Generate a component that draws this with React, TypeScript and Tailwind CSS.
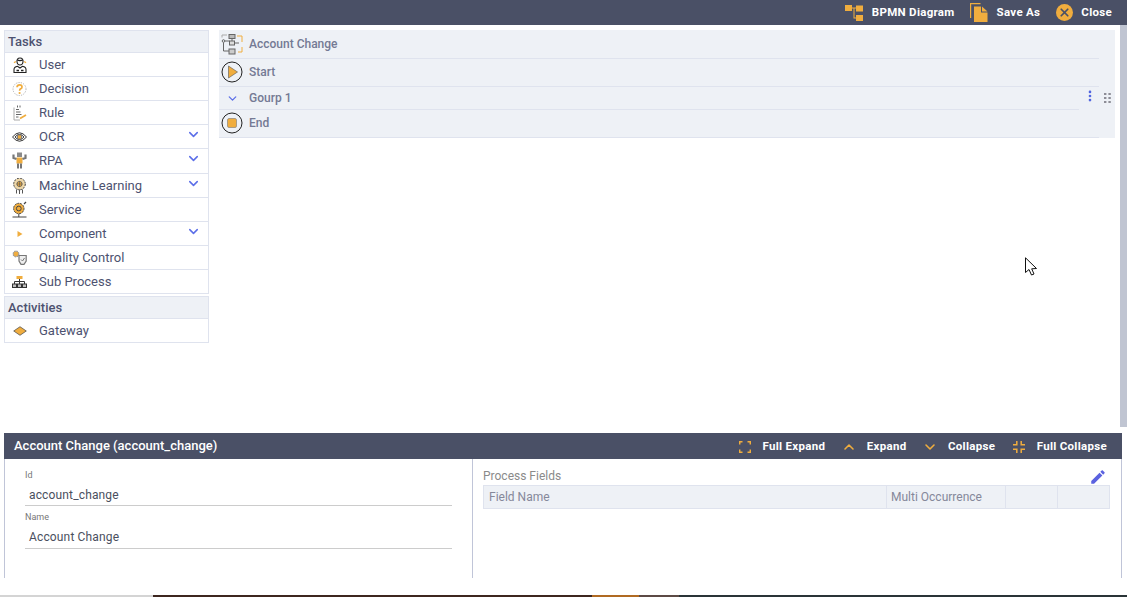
import { ChevronDown, ChevronUp, X, EllipsisVertical } from "lucide-react";
import type { ReactNode } from "react";

const ORANGE = "#f0ad3e";
const INK = "#222";

const UserIcon = () => (
  <svg width="14" height="16" viewBox="0 0 14 16" fill="none" stroke={INK} strokeWidth="1.1">
    <path d="M4 5 Q3.6 1 7 1 Q10.4 1 10 5 Q9.6 8 7 8 Q4.4 8 4 5 Z" />
    <path d="M4 2.8 Q7 4.5 10 2.8" strokeWidth="1.3" />
    <path d="M2.8 4.5 L1 5.8 M11.2 4.5 L13 5.8" stroke={ORANGE} strokeWidth="1.4" />
    <path d="M1 15.5 V12.5 Q1 10 4.5 9.3 L7 11 L9.5 9.3 Q13 10 13 12.5 V15.5 Z" />
    <path d="M3.5 13.5h2.5M8 13.5h2.5" strokeWidth="1.4" />
  </svg>
);
const DecisionIcon = () => (
  <svg width="15" height="16" viewBox="0 0 15 16" fill="none">
    <circle cx="7.5" cy="8" r="6.5" stroke="#a8a8a8" strokeWidth="0.9" strokeDasharray="1.2 1.2" />
    <path d="M5 6.2 Q5.2 3.8 7.6 3.8 Q10 3.8 10 5.9 Q10 7.3 8.5 7.9 Q7.6 8.3 7.6 9.8" stroke={ORANGE} strokeWidth="1.7" />
    <circle cx="7.6" cy="12" r="1.1" fill={ORANGE} />
  </svg>
);
const RuleIcon = () => (
  <svg width="14" height="16" viewBox="0 0 14 16" fill="none" stroke="#666" strokeWidth="1">
    <path d="M1 2.5 V15 H7" stroke="#aaa" />
    <path d="M3 4.5h3M3 7h4.5M3 9.5h5.5M3 12h2.5" />
    <path d="M4.5 0.5v2M7 0.5v2" />
    <path d="M7 13.5 L13 10" stroke={ORANGE} strokeWidth="1.8" />
  </svg>
);
const OcrIcon = () => (
  <svg width="15" height="12" viewBox="0 0 15 12" fill="none" stroke={INK} strokeWidth="0.9">
    <path d="M0.5 6 Q7.5 -2.5 14.5 6 Q7.5 14.5 0.5 6 Z" />
    <path d="M3 6 Q7.5 0.8 12 6 Q7.5 11.2 3 6 Z" />
    <rect x="5.5" y="4" width="4" height="4" fill={ORANGE} stroke="#777" />
  </svg>
);
const RpaIcon = () => (
  <svg width="15" height="17" viewBox="0 0 15 17" fill="none">
    <rect x="5" y="0.5" width="5" height="4.5" fill="#8a8a8a" />
    <rect x="4.5" y="5.5" width="6" height="6" fill={ORANGE} />
    <path d="M4.5 7 L1.5 6 V2.5 M10.5 7 L13.5 6 V2.5" stroke="#777" strokeWidth="2.2" />
    <path d="M6 11.5 V16.5 M9 11.5 V16.5" stroke="#555" strokeWidth="1.6" />
  </svg>
);
const BrainIcon = () => (
  <svg width="15" height="16" viewBox="0 0 15 16" fill="none">
    <circle cx="7.5" cy="6" r="5.8" fill="#eed7a8" stroke="#444" strokeWidth="1" strokeDasharray="2 1" />
    <circle cx="7.5" cy="6" r="2.6" fill={ORANGE} stroke="#555" strokeWidth="0.8" />
    <path d="M4.5 6h6M7.5 3v6" stroke="#555" strokeWidth="0.6" />
    <path d="M4.5 11.5 V15.5 M7.5 11.5 V16 M10.5 11.5 V15.5" stroke="#555" strokeWidth="1" />
  </svg>
);
const ServiceIcon = () => (
  <svg width="15" height="17" viewBox="0 0 15 17" fill="none">
    <circle cx="6.8" cy="7.5" r="5.2" fill={ORANGE} stroke="#444" strokeWidth="1" strokeDasharray="2 0.8" />
    <circle cx="6.8" cy="7.5" r="2.4" stroke="#444" strokeWidth="1" />
    <path d="M0.5 16 H14.5 M6.8 13 V16" stroke="#444" strokeWidth="1" />
    <path d="M12 3 L14 1" stroke="#444" strokeWidth="1.2" />
  </svg>
);
const ComponentIcon = () => (
  <svg width="15" height="16" viewBox="0 0 15 16">
    <path d="M5.5 5 L10.5 8 L5.5 11 Z" fill={ORANGE} />
  </svg>
);
const QualityIcon = () => (
  <svg width="15" height="15" viewBox="0 0 15 15" fill="none">
    <circle cx="4" cy="4" r="2.8" fill={ORANGE} stroke="#999" strokeWidth="1.2" strokeDasharray="1.5 0.7" />
    <path d="M7 5.5 H14.2 V11 L12 14.3 H9 L7 11 Z" fill="#eee" stroke="#777" strokeWidth="1.2" />
    <path d="M9 9.5 L10.5 11 L12.5 8" stroke="#777" strokeWidth="1" />
  </svg>
);
const SubProcessIcon = () => (
  <svg width="15" height="12" viewBox="0 0 15 12" fill="none" stroke="#333" strokeWidth="1">
    <rect x="4.5" y="0" width="6" height="3" fill={ORANGE} stroke="none" />
    <path d="M7.5 3 V5.5 M2.5 8 V5.5 H12.5 V8 M7.5 5.5 V8" />
    <rect x="0.5" y="8" width="4" height="3.5" fill="#bbb" />
    <rect x="5.5" y="8" width="4" height="3.5" fill="#bbb" />
    <rect x="10.5" y="8" width="4" height="3.5" fill="#bbb" />
  </svg>
);
const GatewayIcon = () => (
  <svg width="14" height="10" viewBox="0 0 14 10">
    <path d="M7 0.7 L13.3 5 L7 9.3 L0.7 5 Z" fill={ORANGE} stroke="#444" strokeWidth="0.7" />
  </svg>
);
const ProcessIcon = () => (
  <svg width="22" height="21" viewBox="0 0 22 21" fill="none" stroke="#666" strokeWidth="1">
    <rect x="8" y="0.5" width="6" height="4" fill="#bbb" />
    <path d="M11 4.5 V7" />
    <rect x="8.5" y="7" width="5" height="4" fill="#ddd" />
    <circle cx="2.5" cy="7" r="1.3" />
    <path d="M4 7 H8.5 M2.5 8.5 V17 H8" />
    <path d="M13.5 9 H18" />
    <path d="M16 2 H21 V8" stroke={ORANGE} />
    <path d="M21 13 V18 H17" stroke={ORANGE} />
    <path d="M1 3.5 V1 H6" stroke="#aaa" />
    <rect x="8" y="15" width="6" height="5" fill="#ccc" />
  </svg>
);

const tasks: { label: string; icon: ReactNode; more?: boolean; tall?: boolean }[] = [
  { label: "User", icon: <UserIcon /> },
  { label: "Decision", icon: <DecisionIcon /> },
  { label: "Rule", icon: <RuleIcon /> },
  { label: "OCR", icon: <OcrIcon />, more: true },
  { label: "RPA", icon: <RpaIcon />, more: true, tall: true },
  { label: "Machine Learning", icon: <BrainIcon />, more: true },
  { label: "Service", icon: <ServiceIcon /> },
  { label: "Component", icon: <ComponentIcon />, more: true },
  { label: "Quality Control", icon: <QualityIcon /> },
  { label: "Sub Process", icon: <SubProcessIcon /> },
];

const PaletteRow = ({ label, icon, more, tall }: { label: string; icon: ReactNode; more?: boolean; tall?: boolean }) => (
  <div className={`flex items-center border-b border-[#dfe3ee] text-[13px] text-[#4d5270] ${tall ? "h-[25px] pb-px" : "h-6"}`}>
    <span className="mr-1 flex w-[30px] shrink-0 justify-center pr-px">{icon}</span>
    <span className="flex-1">{label}</span>
    {more ? <ChevronDown size={15} strokeWidth={2.4} className="mr-[7px] -mt-1 text-[#5b6ee8]" /> : null}
  </div>
);

const BarAction = ({ icon, label }: { icon: ReactNode; label: string }) => (
  <div className="flex items-center">
    {icon}
    <span className="text-[11.5px] font-bold tracking-[0.3px] text-white">{label}</span>
  </div>
);

const TreeLine = ({ icon, label, rowClass }: { icon: ReactNode; label: string; rowClass: string }) => (
  <div className={`mr-4 flex items-center border-b border-[#dfe3ee] ${rowClass}`}>
    <span className="mr-1 flex w-[26px] shrink-0 justify-center">{icon}</span>
    <span className="text-[12px] font-medium text-[#747a94]">{label}</span>
  </div>
);

const App = () => {
  return (
    <div className="relative flex h-[597px] w-[1127px] flex-col overflow-hidden bg-white font-['Roboto',sans-serif]">
      <div className="flex h-[25px] shrink-0 items-center justify-end gap-4 bg-[#4a5066] pr-[15px]">
        <BarAction
          label="BPMN Diagram"
          icon={
            <svg width="18" height="16" viewBox="0 0 18 16" fill={ORANGE} className="mr-[9px]">
              <rect x="0" y="0" width="7" height="6" />
              <rect x="11" y="0.5" width="7" height="6" />
              <rect x="11" y="10" width="7" height="6" />
              <path d="M7 2.5h4v1H7zM8.5 3h1v9.5h1.5v1H8.5z" />
            </svg>
          }
        />
        <BarAction
          label="Save As"
          icon={
            <svg width="18" height="19" viewBox="0 0 18 19" fill={ORANGE} className="-ml-px mr-[9px]">
              <path d="M0.6 15 V0.6 H10.5" fill="none" stroke={ORANGE} strokeWidth="1.2" />
              <path d="M4 3.5 H11 V9.5 H17.5 V19 H4 Z" />
              <path d="M12 3.5 L17.5 8.5 H12 Z" />
            </svg>
          }
        />
        <BarAction
          label="Close"
          icon={
            <span className="mr-[8px] flex h-[17px] w-[17px] items-center justify-center rounded-full bg-[#f0ad3e]">
              <X size={13} strokeWidth={3.2} className="text-[#4a5066]" />
            </span>
          }
        />
      </div>

      <div className="flex h-[402px] shrink-0">
        <div className="ml-1 mt-[5px] w-[205px] shrink-0">
          <div className="border border-b-0 border-[#dfe3ee]">
            <div className="flex h-[22px] items-center border-b border-[#dfe3ee] bg-[#eef1f6] pl-[3px] text-[13px] font-medium text-[#4d5270]">
              Tasks
            </div>
            {tasks.map((t) => (
              <PaletteRow key={t.label} label={t.label} icon={t.icon} more={t.more} tall={t.tall} />
            ))}
          </div>
          <div className="mt-[2px] border border-b-0 border-[#dfe3ee]">
            <div className="flex h-[22px] items-center border-b border-[#dfe3ee] bg-[#eef1f6] pl-[3px] text-[13px] font-medium text-[#4d5270]">
              Activities
            </div>
            <PaletteRow label="Gateway" icon={<GatewayIcon />} />
          </div>
        </div>

        <div className="ml-[10px] mt-[5px] w-[896px] shrink-0">
          <div className="h-[108px] bg-[#eef1f6]">
            <TreeLine icon={<ProcessIcon />} label="Account Change" rowClass="h-[29px]" />
            <TreeLine
              label="Start"
              rowClass="h-[28px] pb-[2px]"
              icon={
                <svg width="22" height="22" viewBox="0 0 22 22" fill="none">
                  <circle cx="11" cy="11" r="10" stroke="#222" strokeWidth="1" />
                  <path d="M7.5 5 L16.5 11 L7.5 17 Z" fill={ORANGE} stroke="#555" strokeWidth="0.6" />
                </svg>
              }
            />
            <div className="relative h-[23px]">
              <div className="mr-9 flex h-[23px] items-center border-b border-[#dfe3ee]">
                <span className="mr-1 flex w-[26px] shrink-0 justify-center">
                  <ChevronDown size={13} strokeWidth={2.4} className="text-[#5b6ee8]" />
                </span>
                <span className="text-[12px] font-medium text-[#747a94]">Gourp 1</span>
              </div>
              <EllipsisVertical size={14} strokeWidth={2.6} className="absolute right-[18px] top-[2px] text-[#4f63e0]" />
              <svg width="7" height="10" viewBox="0 0 7 10" fill="#8d8d96" className="absolute right-[4px] top-[6px]">
                <rect x="0" y="0" width="2.4" height="2" />
                <rect x="4.4" y="0" width="2.4" height="2" />
                <rect x="0" y="4" width="2.4" height="2" />
                <rect x="4.4" y="4" width="2.4" height="2" />
                <rect x="0" y="8" width="2.4" height="2" />
                <rect x="4.4" y="8" width="2.4" height="2" />
              </svg>
            </div>
            <TreeLine
              label="End"
              rowClass="h-[28px] pb-[2px]"
              icon={
                <svg width="22" height="22" viewBox="0 0 22 22" fill="none">
                  <circle cx="11" cy="11" r="10" stroke="#222" strokeWidth="1" />
                  <rect x="6.5" y="6.5" width="9" height="9" rx="1.5" fill={ORANGE} stroke="#777" strokeWidth="0.6" />
                </svg>
              }
            />
          </div>
        </div>

        <div className="ml-[5px] w-[7px] shrink-0 bg-[#c0c5d2]" />
      </div>

      <div className="ml-1 mt-[6px] w-[1118px] shrink-0">
        <div className="flex h-[26px] items-center justify-between bg-[#4a5066] pl-[10px] pr-[15px]">
          <span className="text-[13px] font-medium text-white">Account Change (account_change)</span>
          <div className="flex items-center gap-[17.5px] pt-px">
            <BarAction
              label="Full Expand"
              icon={
                <svg width="12" height="12" viewBox="0 0 12 12" fill="none" stroke={ORANGE} strokeWidth="1.5" className="mr-3">
                  <path d="M0.7 3.5 V0.7 H3.5 M8.5 0.7 H11.3 V3.5 M11.3 8.5 V11.3 H8.5 M3.5 11.3 H0.7 V8.5" />
                </svg>
              }
            />
            <BarAction label="Expand" icon={<ChevronUp size={16} strokeWidth={2.4} color={ORANGE} className="-ml-[2px] mr-[10px]" />} />
            <BarAction label="Collapse" icon={<ChevronDown size={16} strokeWidth={2.4} color={ORANGE} className="-ml-[2px] mr-[10px]" />} />
            <BarAction
              label="Full Collapse"
              icon={
                <svg width="12" height="12" viewBox="0 0 12 12" fill="none" stroke={ORANGE} strokeWidth="1.5" className="mr-3">
                  <path d="M0 3.8 H3.8 V0 M8.2 0 V3.8 H12 M12 8.2 H8.2 V12 M3.8 12 V8.2 H0" />
                </svg>
              }
            />
          </div>
        </div>

        <div className="flex h-[119px] border-x border-[#c0c5d8]">
          <div className="w-[468px] shrink-0 border-r border-[#c0c5d8] px-5">
            <div className="mt-[10px] text-[9px] leading-[12px] text-[#777]">Id</div>
            <div className="mt-[5px] h-5 border-b border-[#ccc] pl-1 text-[12px] leading-[18px] tracking-[0.15px] text-[#4a4f5e]">account_change</div>
            <div className="mt-[5px] text-[9px] leading-[12px] text-[#777]">Name</div>
            <div className="mt-[5px] h-[21px] border-b border-[#ccc] pl-1 text-[12px] leading-[18px] tracking-[0.15px] text-[#4a4f5e]">Account Change</div>
          </div>
          <div className="relative flex-1 pl-[10px] pr-[11px]">
            <div className="mt-[9px] h-[17px] text-[12px] leading-[17px] text-[#8a8a8a]">Process Fields</div>
            <svg width="18" height="18" viewBox="0 0 24 24" fill="#5b62e0" className="absolute right-[14px] top-[9px]">
              <path d="M3 17.25V21h3.75L17.81 9.94l-3.75-3.75L3 17.25zM20.71 7.04c.39-.39.39-1.02 0-1.41l-2.34-2.34c-.39-.39-1.02-.39-1.41 0l-1.83 1.83 3.75 3.75 1.83-1.83z" />
            </svg>
            <div className="flex h-[24px] border border-[#dfe3ee] bg-[#eef1f6] text-[12px] leading-[22px] text-[#85889a]">
              <div className="w-[403px] border-r border-[#dfe3ee] pl-[5px]">Field Name</div>
              <div className="w-[119px] border-r border-[#dfe3ee] pl-[4px]">Multi Occurrence</div>
              <div className="w-[52px] border-r border-[#dfe3ee]" />
              <div className="flex-1" />
            </div>
          </div>
        </div>
      </div>

      <div className="mt-auto flex h-[2px] shrink-0">
        <div className="w-[153px] bg-[#d4d4d4]" />
        <div className="w-[439px] bg-[#3d261f]" />
        <div className="w-[47px] bg-[#b06a22]" />
        <div className="w-[40px] bg-[#5c4a45]" />
        <div className="flex-1 bg-[#2a3437]" />
      </div>

      <svg width="13" height="19" viewBox="0 0 13 19" fill="white" stroke="#111" strokeWidth="1" className="absolute left-[1025px] top-[257px]">
        <path d="M0.5 0.8 V15.5 L4 12.5 L6.5 18 L9 17 L6.7 11.8 L11.5 11.5 Z" />
      </svg>
    </div>
  );
};

export default App;
